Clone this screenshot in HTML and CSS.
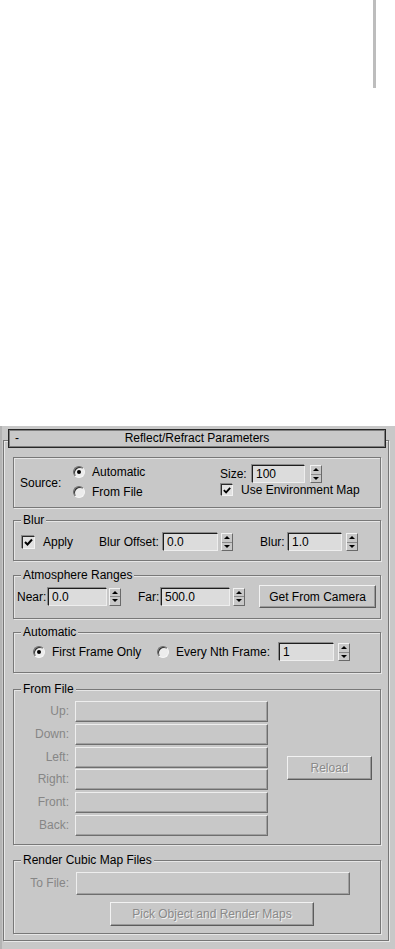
FILE: index.html
```html
<!DOCTYPE html>
<html>
<head>
<meta charset="utf-8">
<link rel="stylesheet" href="styles.css">
</head>
<body>
<div class="top"><div class="vline"></div></div>
<div class="panel">
  <div class="rollout">
    <div class="rhead"><span class="minus">-</span><span class="rtitle">Reflect/Refract Parameters</span><span></span></div>

    <div class="group g-source">
      <div class="src-label">Source:</div>
      <div class="src-radios">
        <div class="opt"><span class="radio on"></span><span>Automatic</span></div>
        <div class="opt"><span class="radio"></span><span>From File</span></div>
      </div>
      <div class="src-right">
        <div class="row size-row"><span class="lbl w-size-l">Size:</span><span class="inp w-size">100</span><span class="spin s5"><i class="up"></i><i class="dn"></i></span></div>
        <div class="opt chk-row"><span class="check on"><svg width="11" height="11" viewBox="0 0 11 11"><polyline points="2,5 4.5,7.5 9,2.5" fill="none" stroke="#000" stroke-width="2"/></svg></span><span>Use Environment Map</span></div>
      </div>
    </div>

    <div class="group g-blur">
      <div class="legend">Blur</div>
      <div class="row r-blur">
        <span class="check on c-apply"><svg width="11" height="11" viewBox="0 0 11 11"><polyline points="2,5 4.5,7.5 9,2.5" fill="none" stroke="#000" stroke-width="2"/></svg></span>
        <span class="lbl l-apply">Apply</span>
        <span class="lbl l-boff">Blur Offset:</span>
        <span class="inp w-boff">0.0</span>
        <span class="spin s3"><i class="up"></i><i class="dn"></i></span>
        <span class="lbl l-blur">Blur:</span>
        <span class="inp w-blur">1.0</span>
        <span class="spin s4"><i class="up"></i><i class="dn"></i></span>
      </div>
    </div>

    <div class="group g-atmo">
      <div class="legend">Atmosphere Ranges</div>
      <div class="row r-atmo">
        <span class="lbl l-near">Near:</span>
        <span class="inp w-near">0.0</span>
        <span class="spin s2"><i class="up"></i><i class="dn"></i></span>
        <span class="lbl l-far">Far:</span>
        <span class="inp w-far">500.0</span>
        <span class="spin s3"><i class="up"></i><i class="dn"></i></span>
        <span class="btn b-cam">Get From Camera</span>
      </div>
    </div>

    <div class="group g-auto">
      <div class="legend">Automatic</div>
      <div class="row r-auto">
        <span class="radio on r1"></span>
        <span class="lbl l-first">First Frame Only</span>
        <span class="radio"></span>
        <span class="lbl l-nth">Every Nth Frame:</span>
        <span class="inp w-nth">1</span>
        <span class="spin s4"><i class="up"></i><i class="dn"></i></span>
      </div>
    </div>

    <div class="group g-file">
      <div class="legend">From File</div>
      <div class="file-body">
        <div class="file-grid">
          <span class="dlbl">Up:</span><span class="dis"></span>
          <span class="dlbl">Down:</span><span class="dis"></span>
          <span class="dlbl">Left:</span><span class="dis"></span>
          <span class="dlbl">Right:</span><span class="dis"></span>
          <span class="dlbl">Front:</span><span class="dis"></span>
          <span class="dlbl">Back:</span><span class="dis"></span>
        </div>
        <span class="btn off b-reload">Reload</span>
      </div>
    </div>

    <div class="group g-render">
      <div class="legend">Render Cubic Map Files</div>
      <div class="row r-tofile">
        <span class="dlbl l-tofile">To File:</span>
        <span class="dis w-tofile"></span>
      </div>
      <div class="row r-pick">
        <span class="btn off b-pick">Pick Object and Render Maps</span>
      </div>
    </div>
  </div>
</div>
</body>
</html>
```
FILE: styles.css
```css
* { box-sizing: border-box; }
body {
  margin: 0;
  background: #fff;
  font-family: "Liberation Sans", Arial, sans-serif;
  font-size: 12px;
  color: #000;
}
.top { height: 426px; }
.vline { margin-left: 373px; width: 3px; height: 88px; background: #bdbdbd; }

.panel {
  background: #c8c8c8;
  height: 523px;
  padding-top: 14px;
  border-left: 2px solid #b4b4b4;
}
.rollout {
  margin-left: 1px;
  width: 386px;
  height: 501px;
  border: 1px solid #767676;
  box-shadow: inset 1px 1px 0 #e8e8e8, 1px 1px 0 #e8e8e8;
}
.rhead {
  margin: -12px 0 0 4px;
  width: 378px;
  height: 19px;
  border: 1px solid #262626;
  box-shadow: inset 0 0 0 1px #7e7e7e;
  background: #c8c8c8;
  display: grid;
  grid-template-columns: 1fr auto 1fr;
  align-items: center;
  line-height: 15px;
}
.minus { padding-left: 6px; }

.group {
  margin-left: 9px;
  width: 368px;
  border: 1px solid #787878;
  box-shadow: inset 1px 1px 0 #e6e6e6, 1px 1px 0 #e6e6e6;
}
.legend {
  margin: -8px 0 0 7px;
  padding: 0 2px;
  width: max-content;
  line-height: 14px;
  background: #c8c8c8;
}
.row { display: flex; align-items: center; }
.lbl { line-height: 14px; white-space: nowrap; }

/* widgets */
.inp {
  height: 18px;
  border: 1px solid;
  border-color: #1e1e1e #eeeeee #eeeeee #1e1e1e;
  box-shadow: -1px -1px 0 #8c8c8c;
  background: #dcdcdc;
  padding-left: 3px;
  display: flex;
  align-items: center;
  flex: none;
}
.spin {
  width: 12px;
  height: 18px;
  border: 1px solid;
  border-color: #f2f2f2 #6a6a6a #6a6a6a #f2f2f2;
  background: #c8c8c8;
  display: flex;
  flex-direction: column;
  flex: none;
}
.spin i { flex: 1; display: flex; align-items: center; justify-content: center; }
.spin i + i { border-top: 1px solid #8a8a8a; }
.spin .up::before {
  content: ""; border-left: 3px solid transparent; border-right: 3px solid transparent; border-bottom: 3px solid #000;
}
.spin .dn::before {
  content: ""; border-left: 3px solid transparent; border-right: 3px solid transparent; border-top: 3px solid #000;
}
.s2 { margin-left: 2px; }
.s3 { margin-left: 3px; }
.s4 { margin-left: 4px; }
.s5 { margin-left: 5px; }

.radio {
  width: 12px; height: 12px; border-radius: 50%;
  border: 1px solid;
  border-color: #6a6a6a #f6f6f6 #f6f6f6 #6a6a6a;
  box-shadow: inset 1px 1px 0 #303030;
  background: #ececec;
  display: grid; place-items: center;
  flex: none;
}
.radio.on::after { content: ""; width: 4px; height: 4px; border-radius: 50%; background: #000; }

.check {
  width: 13px; height: 13px;
  border: 1px solid;
  border-color: #2a2a2a #f2f2f2 #f2f2f2 #2a2a2a;
  box-shadow: -1px -1px 0 #8a8a8a;
  background: #e2e2e2;
  display: flex; align-items: center; justify-content: center;
  flex: none;
}
.check svg { display: block; }

.btn {
  border: 1px solid;
  border-color: #f2f2f2 #5c5c5c #5c5c5c #f2f2f2;
  box-shadow: inset -1px -1px 0 #9a9a9a;
  background: #c8c8c8;
  display: flex; align-items: center; justify-content: center;
  white-space: nowrap;
  flex: none;
}
.btn.off { color: #8a8a8a; text-shadow: 1px 1px 0 #f0f0f0; }

.dis {
  border: 1px solid;
  border-color: #eeeeee #6e6e6e #6e6e6e #eeeeee;
  box-shadow: inset -1px -1px 0 #a0a0a0;
  background: #c8c8c8;
}
.dlbl { color: #868686; text-align: right; white-space: nowrap; }

/* source group */
.g-source { margin-top: 9px; height: 51px; display: flex; }
.src-label { width: 59px; padding: 18px 0 0 6px; line-height: 14px; }
.src-radios { width: 147px; padding-top: 4px; }
.opt { display: flex; align-items: center; height: 20px; gap: 7px; white-space: nowrap; }
.src-right { padding-top: 7px; }
.size-row { height: 18px; }
.w-size-l { width: 32px; }
.w-size { width: 53px; }
.chk-row { height: 14px; gap: 8px; padding-left: 1px; }
.chk-row .check { width: 12px; height: 12px; }

/* blur */
.g-blur { margin-top: 12px; height: 41px; }
.r-blur { margin-top: 6px; height: 18px; }
.c-apply { margin-left: 8px; }
.l-apply { margin-left: 8px; width: 56px; }
.l-boff { width: 64px; }
.w-boff { width: 55px; }
.l-blur { margin-left: 27px; width: 28px; }
.w-blur { width: 54px; }

/* atmosphere */
.g-atmo { margin-top: 14px; height: 44px; }
.r-atmo { margin-top: 3px; height: 23px; }
.l-near { margin-left: 3px; width: 31px; }
.w-near { width: 59px; }
.l-far { margin-left: 17px; width: 23px; }
.w-far { width: 69px; }
.b-cam { margin-left: 14px; width: 117px; height: 23px; }

/* automatic */
.g-auto { margin-top: 13px; height: 41px; }
.r-auto { margin-top: 4px; height: 18px; }
.r1 { margin-left: 19px; }
.l-first { margin-left: 7px; width: 105px; }
.l-nth { margin-left: 7px; width: 103px; }
.w-nth { width: 55px; }

/* from file */
.g-file { margin-top: 16px; height: 156px; }
.file-body { margin-top: 5px; display: flex; align-items: center; }
.file-grid {
  display: grid;
  grid-template-columns: 55px 193px;
  grid-auto-rows: 21px;
  column-gap: 6px;
  row-gap: 1.8px;
  line-height: 21px;
}
.b-reload { margin-left: 19px; width: 85px; height: 24px; }

/* render */
.g-render { margin-top: 15px; height: 74px; }
.r-tofile { margin-top: 5px; height: 23px; }
.l-tofile { width: 55px; line-height: 23px; }
.w-tofile { margin-left: 7px; width: 274px; height: 23px; }
.r-pick { margin-top: 7px; }
.b-pick { margin-left: 96px; width: 204px; height: 24px; }
```
